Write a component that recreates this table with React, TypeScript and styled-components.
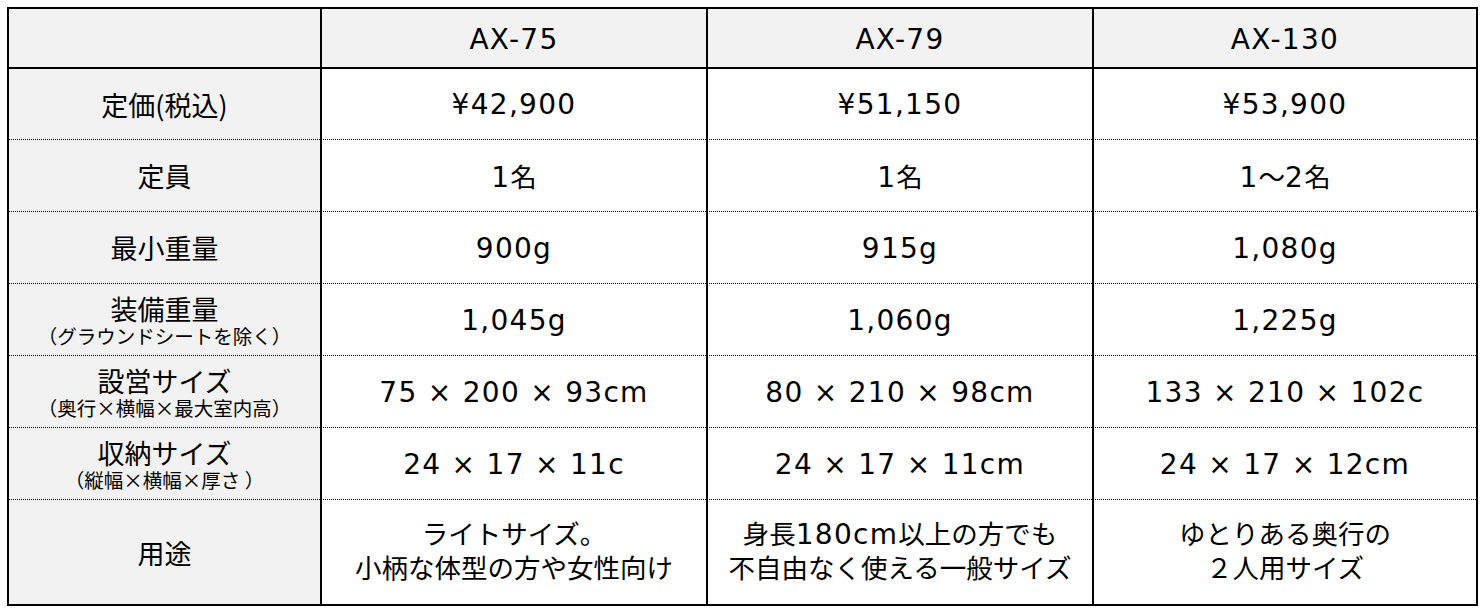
import React from "react";
import styled, { createGlobalStyle } from "styled-components";

const Global = createGlobalStyle`
  html, body { margin: 0; padding: 0; background: #ffffff; }
  body { font-family: "Noto Sans CJK JP", "Noto Sans", sans-serif; color: #000; }
`;

const Page = styled.div`
  padding: 7px 0 0 7px;
`;

const Table = styled.div`
  display: grid;
  grid-template-columns: 311px 386px 386px 384px;
  grid-template-rows: 58px 72px 72px 72px 72px 72px 72px 105px;
  width: 1471px;
  box-sizing: border-box;
  border: 2px solid #000;
`;

type Sep = "none" | "solid" | "dotted";

const Cell = styled.div<{ $gray: boolean; $left: boolean; $sep: Sep; $shift?: number }>`
  box-sizing: border-box;
  display: flex;
  flex-direction: column;
  align-items: center;
  justify-content: center;
  text-align: center;
  background: ${(p) => (p.$gray ? "#f2f2f2" : "#ffffff")};
  border-left: ${(p) => (p.$left ? "2px solid #000" : "none")};
  border-top: ${(p) =>
    p.$sep === "solid" ? "2px solid #000" : p.$sep === "dotted" ? "1px dotted #000" : "none"};
  padding-top: ${(p) => p.$shift ?? 0}px;
  color: #000;
`;

const Line = styled.div<{ $lh: number }>`
  line-height: ${(p) => p.$lh}px;
  white-space: nowrap;
`;

const Cjk = styled.span`
  font-family: "Noto Sans CJK JP", sans-serif;
  font-size: 26.5px;
  letter-spacing: 0;
`;

const Latin = styled.span`
  font-family: "DejaVu Sans", "Noto Sans CJK JP", sans-serif;
  font-size: 28px;
  letter-spacing: 1.3px;
`;

const LabelMain = styled.div`
  font-family: "Noto Sans CJK JP", sans-serif;
  font-size: 27px;
  line-height: 30px;
  white-space: nowrap;
`;

const LabelSub = styled.div`
  font-family: "Noto Sans CJK JP", sans-serif;
  font-size: 19.5px;
  line-height: 23px;
  white-space: nowrap;
`;

const cjkRe = /([\u3000-\u30ff\u4e00-\u9fff\uff00-\uffef]+)/;

function Mixed({ text }: { text: string }) {
  const parts = text.split(cjkRe).filter((s) => s.length > 0);
  return (
    <>
      {parts.map((p, i) =>
        cjkRe.test(p) ? <Cjk key={i}>{p}</Cjk> : <Latin key={i}>{p}</Latin>
      )}
    </>
  );
}

type Row = { label: string; sub?: string; values: string[][] };

const headers = ["AX-75", "AX-79", "AX-130"];

const rows: Row[] = [
  { label: "定価(税込)", values: [["¥42,900"], ["¥51,150"], ["¥53,900"]] },
  { label: "定員", values: [["1名"], ["1名"], ["1～2名"]] },
  { label: "最小重量", values: [["900g"], ["915g"], ["1,080g"]] },
  {
    label: "装備重量",
    sub: "（グラウンドシートを除く）",
    values: [["1,045g"], ["1,060g"], ["1,225g"]],
  },
  {
    label: "設営サイズ",
    sub: "（奥行×横幅×最大室内高）",
    values: [["75 × 200 × 93cm"], ["80 × 210 × 98cm"], ["133 × 210 × 102c"]],
  },
  {
    label: "収納サイズ",
    sub: "（縦幅×横幅×厚さ ）",
    values: [["24 × 17 × 11c"], ["24 × 17 × 11cm"], ["24 × 17 × 12cm"]],
  },
  {
    label: "用途",
    values: [
      ["ライトサイズ。", "小柄な体型の方や女性向け"],
      ["身長180cm以上の方でも", "不自由なく使える一般サイズ"],
      ["ゆとりある奥行の", "２人用サイズ"],
    ],
  },
];

export default function App() {
  return (
    <>
      <Global />
      <Page>
        <Table>
          <Cell $gray $left={false} $sep="none" />
          {headers.map((h) => (
            <Cell key={h} $gray $left $sep="none" $shift={5}>
              <Line $lh={30}>
                <Latin>{h}</Latin>
              </Line>
            </Cell>
          ))}
          {rows.map((r, ri) => {
            const sep: Sep = ri === 0 ? "solid" : "dotted";
            const multi = r.values[0].length > 1;
            return (
              <React.Fragment key={r.label}>
                <Cell $gray $left={false} $sep={sep} $shift={r.sub ? 2 : 1}>
                  <LabelMain>{r.label}</LabelMain>
                  {r.sub && <LabelSub>{r.sub}</LabelSub>}
                </Cell>
                {r.values.map((v, vi) => (
                  <Cell key={vi} $gray={false} $left $sep={sep} $shift={multi ? 0 : 4}>
                    {v.map((line, li) => (
                      <Line key={li} $lh={30}>
                        <Mixed text={line} />
                      </Line>
                    ))}
                  </Cell>
                ))}
              </React.Fragment>
            );
          })}
        </Table>
      </Page>
    </>
  );
}
